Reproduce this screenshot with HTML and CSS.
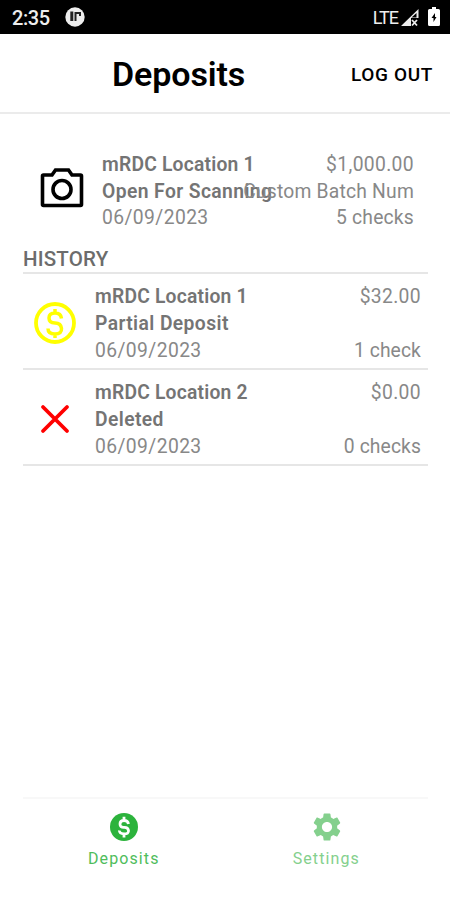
FILE: index.html
```html
<!DOCTYPE html>
<html lang="en">
<head>
<meta charset="utf-8">
<title>Deposits</title>
<link rel="stylesheet" href="styles.css">
</head>
<body>
<div class="status">
  <span class="time">2:35</span>
  <svg class="app-dot" width="20" height="20" viewBox="0 0 20 20"><circle cx="10" cy="10" r="9.7" fill="#eee"/><path d="M6.800 4.500v9.500" fill="none" stroke="#222" stroke-width="3"/><path d="M10.500 14V6h4.500v3" fill="none" stroke="#222" stroke-width="2"/></svg>
  <span class="lte">LTE</span>
  <svg class="signal" width="19" height="19" viewBox="0 0 19 19"><path d="M0 18 17.500 1v9H10v8z" fill="#eee"/><path d="M10.500 9.500 15.500 5v4.500z" fill="#000"/><path d="m11 12 5 5.500m0-5.500-5 5.500" stroke="#eee" stroke-width="1.8"/></svg>
  <svg class="battery" width="12" height="20" viewBox="0 0 12 20"><path d="M4 0h4v2h2.500q1.500 0 1.500 1.500v14q0 1.500-1.500 1.500h-9Q0 19 0 17.500V3.500Q0 2 1.500 2H4z" fill="#fff"/><path d="M7 6 3.500 11H5.500v4L8.500 10H7z" fill="#000"/></svg>
</div>
<header class="header">
  <h1 class="title">Deposits</h1>
  <span class="logout">LOG OUT</span>
</header>
<main class="content">
  <section class="row current">
    <div class="icon"><svg width="44" height="40" viewBox="0 0 44 40"><path d="M3.500 7H12l3.500-5h13L32 7h8.500q1 0 1 1v28.500q0 1-1 1h-37q-1 0-1-1V8q0-1 1-1z" fill="none" stroke="#000" stroke-width="3.600"/><circle cx="22" cy="21.500" r="9" fill="none" stroke="#000" stroke-width="3.600"/></svg></div>
    <div class="info"><b>mRDC Location 1</b><b>Open For Scanning</b><span>06/09/2023</span></div>
    <div class="figures"><span>$1,000.00</span><span>Custom Batch Num</span><span>5 checks</span></div>
  </section>
  <h2 class="history">HISTORY</h2>
  <section class="row">
    <div class="icon"><svg width="42" height="42" viewBox="0 0 42 42" fill="none" stroke="#ff0"><circle cx="21" cy="21" r="19" stroke-width="3.800"/><path d="M27.500 16.500Q27 11 21 11t-6 5 6 5 6.500 5.500-6.500 5.500-7-5.500M21 7v4m0 21v4" stroke-width="3.500"/></svg></div>
    <div class="info"><b>mRDC Location 1</b><b>Partial Deposit</b><span>06/09/2023</span></div>
    <div class="figures"><span>$32.00</span><span></span><span>1 check</span></div>
  </section>
  <section class="row">
    <div class="icon"><svg width="28" height="28" viewBox="0 0 28 28"><path d="m2 2 24 24m0-24L2 26" stroke="#f00" stroke-width="3.800" stroke-linecap="round"/></svg></div>
    <div class="info"><b>mRDC Location 2</b><b>Deleted</b><span>06/09/2023</span></div>
    <div class="figures"><span>$0.00</span><span></span><span>0 checks</span></div>
  </section>
</main>
<nav class="tabs">
  <div class="tab active"><svg width="28" height="28" viewBox="0 0 28 28"><circle cx="14" cy="14" r="14" fill="#2cb33c"/><path d="M18.500 11Q18 7.500 14 7.500T10 11t4 3.300 4.500 3.200-4.500 3.300-4.500-3.300M14 3.800v3.700m0 13.300v3.700" fill="none" stroke="#fff" stroke-width="2.800"/></svg><span>Deposits</span></div>
  <div class="tab"><svg width="34" height="34" viewBox="0 0 24 24"><path fill="#84d08d" d="M19.140 12.940c.04-.3.06-.61.06-.94s-.02-.64-.07-.94l2.030-1.580c.18-.14.23-.41.12-.61l-1.920-3.320c-.12-.22-.37-.29-.59-.22l-2.390.96c-.5-.38-1.030-.7-1.620-.94l-.36-2.540c-.04-.24-.24-.41-.48-.41h-3.840c-.24 0-.43.17-.47.41l-.36 2.540c-.59.24-1.130.57-1.620.94l-2.390-.96c-.22-.08-.47 0-.59.22L2.740 8.870c-.12.210-.08.470.12.610l2.030 1.580c-.05.3-.09.630-.09.940s.02.640.07.940l-2.030 1.580c-.18.140-.23.410-.12.610l1.920 3.320c.12.220.37.290.59.220l2.390-.96c.5.380 1.030.7 1.620.940l.36 2.540c.05.240.24.410.48.410h3.840c.24 0 .44-.17.47-.41l.36-2.540c.59-.24 1.130-.56 1.620-.94l2.390.96c.22.080.47 0 .59-.22l1.920-3.320c.12-.22.070-.47-.12-.61zM12 15.600c-1.980 0-3.600-1.620-3.600-3.600s1.620-3.600 3.600-3.600 3.600 1.620 3.600 3.600-1.620 3.600-3.600 3.600z"/></svg><span>Settings</span></div>
</nav>
</body>
</html>
```
FILE: styles.css
```css
* { box-sizing: border-box; }
body { margin: 0; width: 450px; height: 900px; display: flex; flex-direction: column; background: #fff; font-family: Roboto, sans-serif; overflow: hidden; }
svg { display: block; flex: none; overflow: visible; }
.status { height: 34px; flex: none; background: #000; color: #eee; display: flex; align-items: center; padding: 0 10px 0 12px; }
.time { font-size: 20px; font-weight: 500; letter-spacing: -.4px; width: 53px; padding-top: 2px; }
.lte { margin-left: auto; font-size: 18px; letter-spacing: -1px; margin-right: 3px; }
.signal { margin-right: 8px; }
.header { height: 80px; flex: none; position: relative; display: flex; align-items: center; justify-content: space-between; padding: 2px 17px 0 112px; border-bottom: 2px solid #ebebeb; }
.title { margin: 0; font-size: 34px; line-height: 40px; font-weight: 600; letter-spacing: -.1px; }
.logout { font-size: 19px; font-weight: 500; letter-spacing: .65px; }
.content { flex: 1; padding: 37px 22px 0 23px; }
.row { height: 96px; display: flex; align-items: center; padding: 7px 7px 0 0; border-bottom: 2px solid #e6e6e6; }
.icon { width: 64px; margin-right: 8px; padding-bottom: 4px; display: flex; justify-content: center; flex: none; }
.info, .figures { display: grid; grid-template-rows: repeat(3, 26.700px); line-height: 26.700px; font-size: 19.300px; white-space: nowrap; letter-spacing: .4px; color: #888; }
.info b { font-weight: 600; color: #747474; }
.info b:first-child { letter-spacing: .2px; }
.figures { flex: 1; min-width: 0; justify-items: end; letter-spacing: .1px; }
.figures span:first-child { letter-spacing: .35px; }
.current { padding: 0 14px 0 7px; border: 0; height: 82px; }
.current .icon { padding-bottom: 8px; }
.current .figures { margin-left: -40px; letter-spacing: .2px; }
.history { margin: 12px 0 0; height: 29px; line-height: 28px; font-size: 20.500px; letter-spacing: .2px; font-weight: 500; color: #6c6c6c; border-bottom: 2px solid #e6e6e6; }
.tabs { height: 103px; flex: none; margin: 0 22px 0 23px; border-top: 2px solid #f8f8f8; display: flex; }
.tab { flex: 1; display: flex; flex-direction: column; align-items: center; padding-top: 11px; font-size: 16px; letter-spacing: 1.100px; color: #84d08d; }
.tab svg { height: 34px; }
.active { color: #4fbd5b; }
.tab span { line-height: 20px; margin-top: 5px; margin-right: 1px; }
```
